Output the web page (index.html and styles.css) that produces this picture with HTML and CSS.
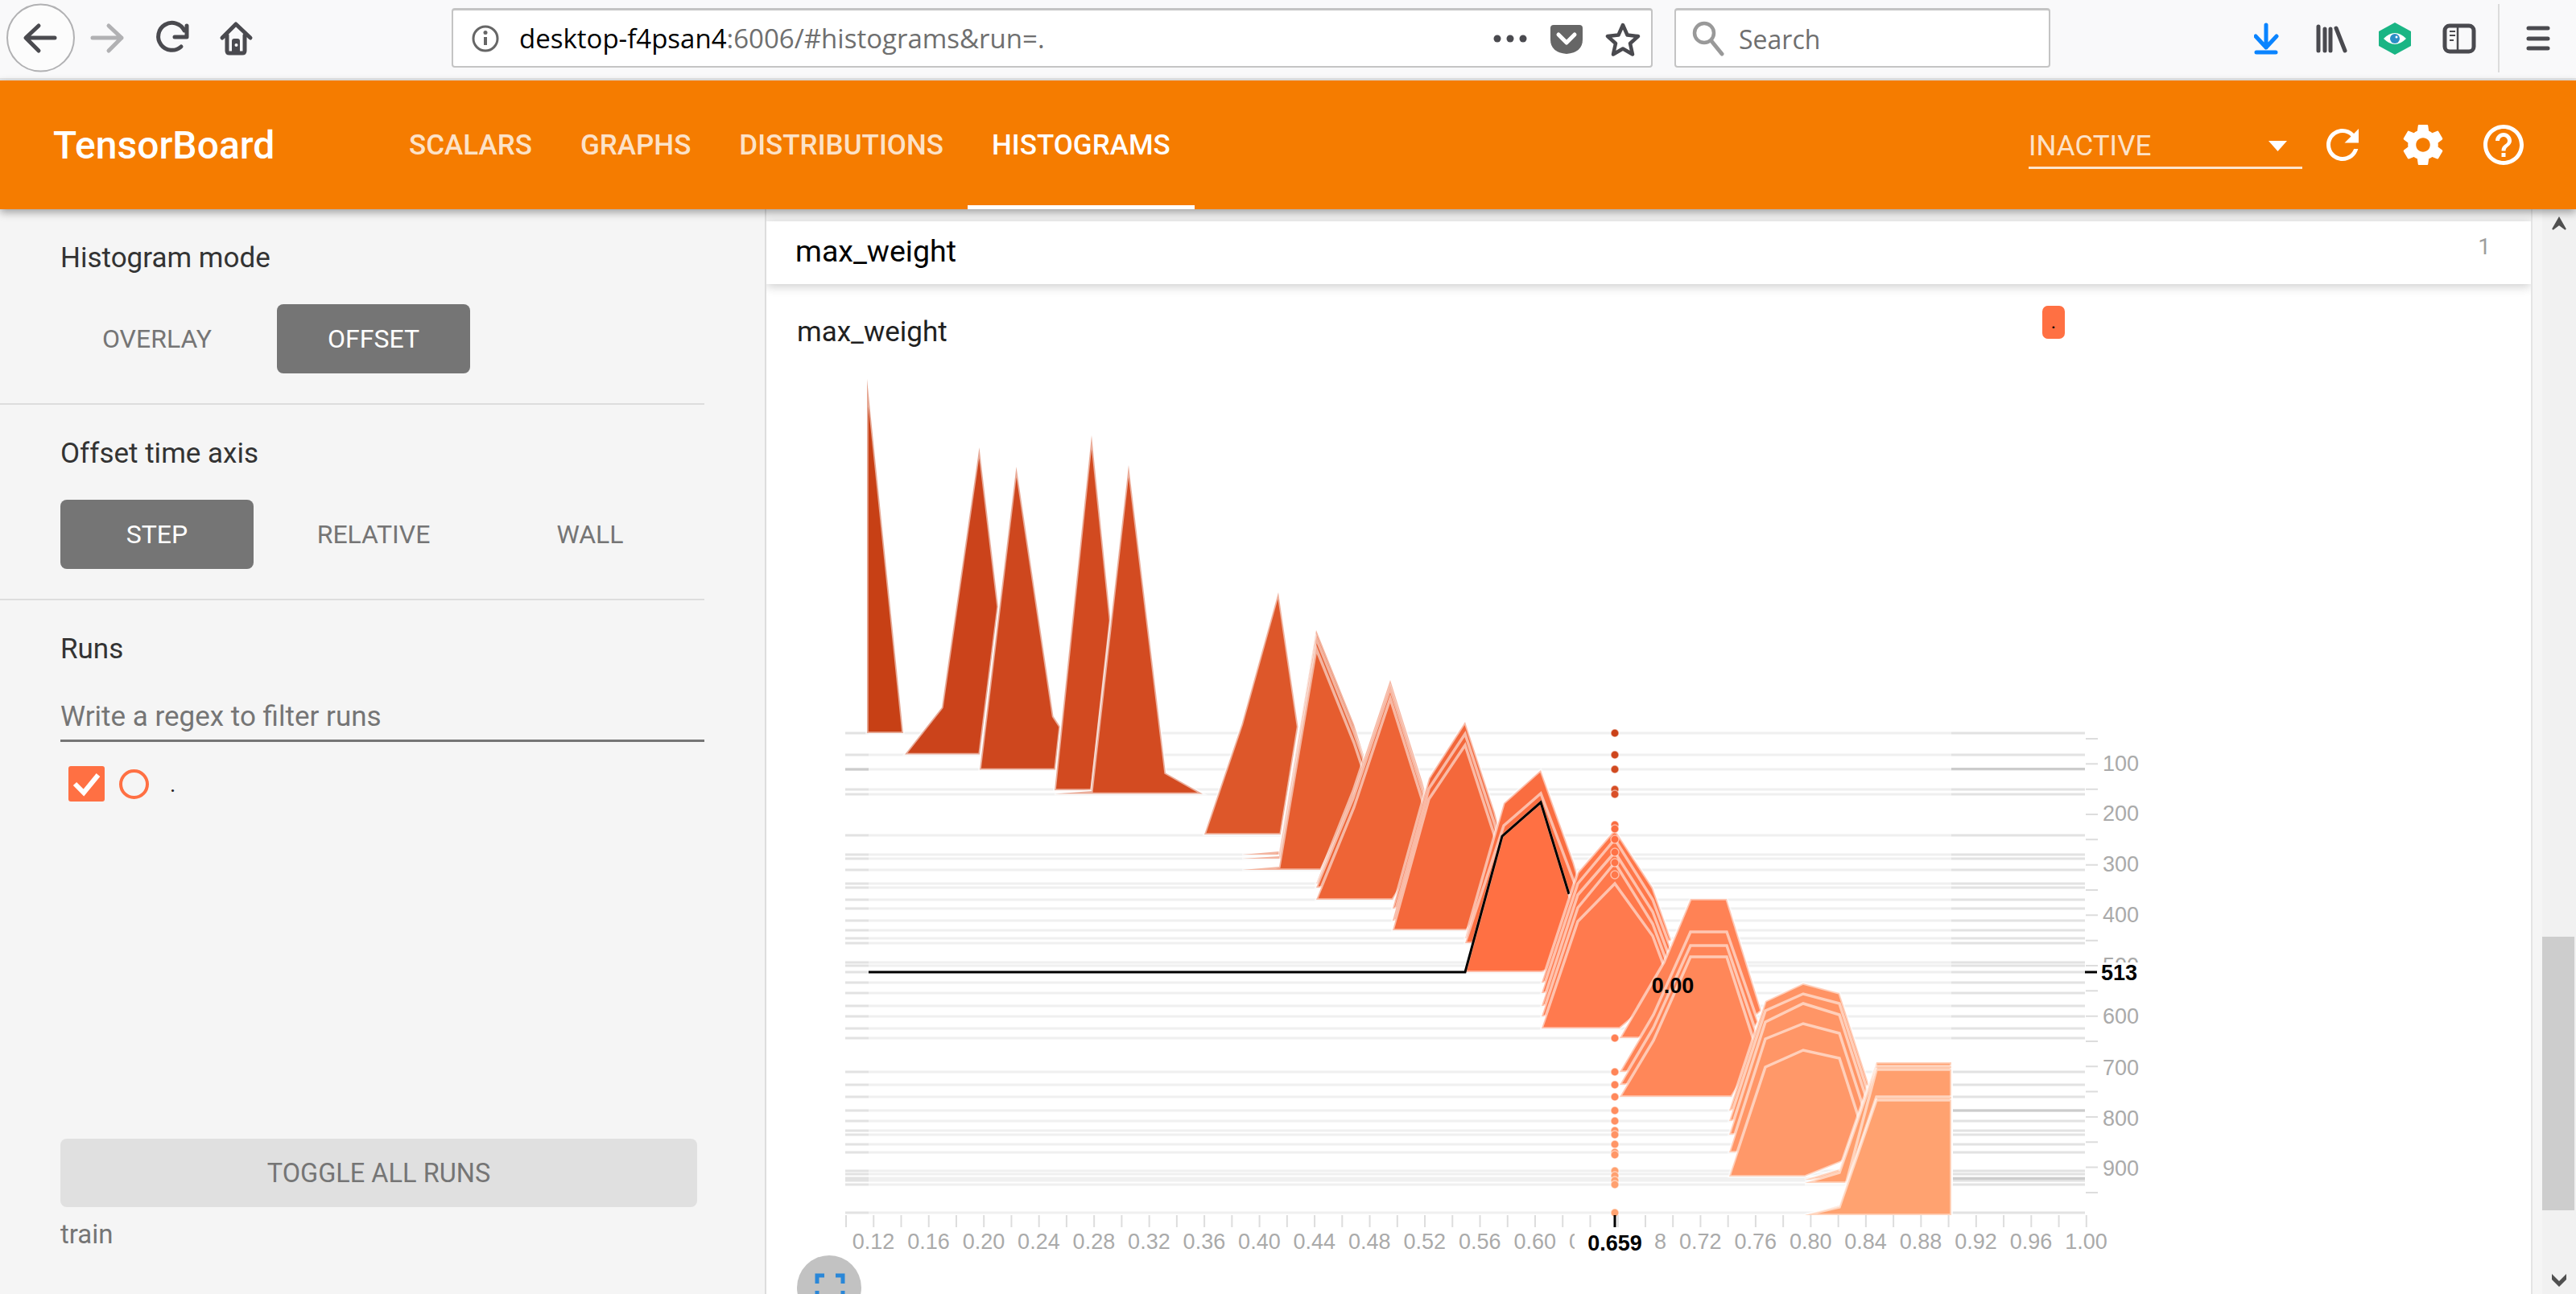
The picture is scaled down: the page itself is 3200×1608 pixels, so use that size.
FILE: index.html
```html
<!DOCTYPE html>
<html lang="en">
<head>
  <meta charset="UTF-8" />
  <title>TensorBoard</title>
  <link rel="stylesheet" href="styles.css">
</head>
<body>
  <div class="browser">
    <svg class="browser-nav" width="340" height="97" viewBox="0 0 340 97">
      <circle cx="50.5" cy="47" r="41.5" fill="#fcfcfc" stroke="#b1b1b3" stroke-width="2"/>
      <path class="ico" d="M68 47H33M48 32L32 47l16 16"/>
      <path class="ico ico-off" d="M115 47h36M135 32l16 15-16 16"/>
      <path class="ico" d="M225 58a17 17 0 1 1 4-20M232 32v14h-15"/>
      <path class="ico" d="M276 47l17-17 18 17M282 44v19q0 3 3 3h16q3 0 3-3V44"/>
      <path d="M288 66V51q0-3 3-3h4q3 0 3 3v15z" fill="#4a4a4f"/>
      <circle cx="293.500" cy="56" r="2" fill="#f9f9fa"/>
    </svg>
    <div class="urlbar">
      <svg width="36" height="36" viewBox="0 0 36 36"><circle cx="18" cy="18" r="15" fill="none" stroke="#666" stroke-width="3"/><path d="M18 16v10" stroke="#666" stroke-width="4"/><circle cx="18" cy="10.500" r="2.500" fill="#666"/></svg>
      <span class="url"><b>desktop-f4psan4</b>:6006/#histograms&amp;run=.</span>
      <svg class="url-actions" width="184" height="44" viewBox="0 0 184 44">
        <circle cx="5" cy="22" r="4.500" fill="#4a4a4f"/><circle cx="21" cy="22" r="4.500" fill="#4a4a4f"/><circle cx="37" cy="22" r="4.500" fill="#4a4a4f"/>
        <path d="M71 9q0-4 4-4h32q4 0 4 4v14q0 16-20 18-20-2-20-18z" fill="#666"/>
        <path d="M81 17l10 10 10-10" fill="none" stroke="#fff" stroke-width="5" stroke-linecap="round" stroke-linejoin="round"/>
        <path d="M161 5l5.500 12.500 13.500 1.500-10 9 3 13.500-12-7-12 7 3-13.500-10-9 13.500-1.500z" fill="none" stroke="#4a4a4f" stroke-width="4.500" stroke-linejoin="round"/>
      </svg>
    </div>
    <div class="searchbar">
      <svg width="44" height="44" viewBox="0 0 44 44"><circle cx="17" cy="15" r="12" fill="none" stroke="#999" stroke-width="4.500"/><path d="M26 25l13 16" stroke="#999" stroke-width="5" stroke-linecap="round"/></svg>
      <span>Search</span>
    </div>
    <svg class="browser-tools" width="400" height="97" viewBox="2800 0 400 97">
      <path d="M2815 31v28M2802 45l13 14 13-14M2803 65h24" fill="none" stroke="#0a84ff" stroke-width="5" stroke-linecap="round" stroke-linejoin="round"/>
      <path class="ico" d="M2880 33v30M2888 36v27M2895 36v27M2902 35l11 28"/>
      <path d="M2975 28l20 11v18l-20 11-20-11V39z" fill="#1ab584"/>
      <path d="M2961 48q14-14 28 0-14 14-28 0z" fill="#fff"/>
      <circle cx="2975" cy="48" r="6" fill="#2a8fc5"/>
      <circle cx="2977" cy="46" r="1.500" fill="#fff"/>
      <rect x="3037" y="32" width="36" height="32" rx="6" fill="none" stroke="#4a4a4f" stroke-width="5"/>
      <path d="M3053 32v32" stroke="#4a4a4f" stroke-width="2.500"/>
      <path d="M3043 39h7M3043 44h7M3043 50h5" stroke="#4a4a4f" stroke-width="2"/>
      <rect x="3103" y="5" width="2" height="85" fill="#dcdcdc"/>
      <path class="ico" d="M3141 35h24M3141 48h24M3141 60h24"/>
    </svg>
  </div>

  <header class="topbar">
    <div class="brand">TensorBoard</div>
    <nav class="tabs">
      <a class="tab">Scalars</a>
      <a class="tab">Graphs</a>
      <a class="tab">Distributions</a>
      <a class="tab active">Histograms</a>
    </nav>
    <div class="topbar-right">
      <div class="dropdown">
        <span>Inactive</span>
        <svg width="24" height="14" viewBox="0 0 24 14"><path d="M0 0h23L11.500 13z" fill="#fff"/></svg>
      </div>
      <svg class="top-ico" viewBox="0 0 24 24"><path d="M17.650 6.350C16.200 4.900 14.210 4 12 4c-4.420 0-7.990 3.580-7.990 8s3.570 8 7.990 8c3.730 0 6.840-2.550 7.730-6h-2.080c-.82 2.330-3.040 4-5.650 4-3.310 0-6-2.690-6-6s2.690-6 6-6c1.660 0 3.140.69 4.220 1.780L13 11h7V4l-2.350 2.350z"/></svg>
      <svg class="top-ico" viewBox="0 0 24 24"><path d="M19.430 12.980c.04-.32.07-.64.07-.98s-.03-.66-.07-.98l2.110-1.650c.19-.15.24-.42.12-.64l-2-3.460c-.12-.22-.39-.3-.61-.22l-2.490 1c-.52-.4-1.080-.73-1.690-.98l-.38-2.650C14.460 2.180 14.250 2 14 2h-4c-.25 0-.46.18-.49.42l-.38 2.650c-.61.25-1.170.59-1.690.98l-2.490-1c-.23-.09-.49 0-.61.22l-2 3.460c-.13.22-.07.49.12.64l2.110 1.650c-.04.32-.07.65-.07.98s.03.66.07.98l-2.110 1.650c-.19.15-.24.42-.12.64l2 3.460c.12.22.39.3.61.22l2.490-1c.52.4 1.080.73 1.690.98l.38 2.650c.03.24.24.42.49.42h4c.25 0 .46-.18.49-.42l.38-2.650c.61-.25 1.170-.59 1.690-.98l2.490 1c.23.09.49 0 .61-.22l2-3.460c.12-.22.07-.49-.12-.64l-2.110-1.650zM12 15.500c-1.930 0-3.500-1.570-3.500-3.500s1.570-3.500 3.500-3.500 3.500 1.570 3.500 3.500-1.570 3.500-3.500 3.500z"/></svg>
      <svg class="top-ico" viewBox="0 0 24 24"><path d="M11 18h2v-2h-2v2zm1-16C6.480 2 2 6.480 2 12s4.480 10 10 10 10-4.480 10-10S17.520 2 12 2zm0 18c-4.410 0-8-3.590-8-8s3.590-8 8-8 8 3.590 8 8-3.590 8-8 8zm0-14c-2.210 0-4 1.790-4 4h2c0-1.100.9-2 2-2s2 .9 2 2c0 2-3 1.750-3 5h2c0-2.250 3-2.500 3-5 0-2.210-1.790-4-4-4z"/></svg>
    </div>
  </header>

  <div class="content">
    <aside class="sidebar">
      <section class="side-section">
        <div class="side-label">Histogram mode</div>
        <div class="btn-row">
          <div class="mode-btn">Overlay</div>
          <div class="mode-btn on">Offset</div>
        </div>
      </section>
      <section class="side-section">
        <div class="side-label">Offset time axis</div>
        <div class="btn-row">
          <div class="mode-btn on">Step</div>
          <div class="mode-btn">Relative</div>
          <div class="mode-btn">Wall</div>
        </div>
      </section>
      <section class="side-section runs">
        <div class="side-label">Runs</div>
        <div class="filter">Write a regex to filter runs</div>
        <div class="run-row">
          <svg class="run-check" width="45" height="44" viewBox="0 0 45 44"><rect width="45" height="44" rx="3" fill="#ff7043"/><path d="M8 22l11 11 18-22" fill="none" stroke="#fff" stroke-width="6"/></svg>
          <span class="run-radio"></span>
          <span class="run-name">.</span>
        </div>
      </section>
      <div class="side-footer">
        <div class="toggle">Toggle all runs</div>
        <div class="train">train</div>
      </div>
    </aside>

    <main class="main">
      <div class="card-head">
        <span class="card-title">max_weight</span>
        <span class="card-count">1</span>
      </div>
      <div class="chart-head">
        <span class="chart-title">max_weight</span>
        <span class="chart-tag">.</span>
      </div>
      <svg class="chart" width="2192" height="1148" viewBox="952 460 2192 1148">
        <!-- baselines, one per step -->
        <path class="base" d="M1079 911H2424M1079 938H2424M1079 956H2424M1079 981H2424M1079 987H2424M1079 1038H2424M1079 1062H2424M1079 1067H2424M1079 1081H2424M1079 1098H2424M1079 1103H2424M1079 1118H2424M1079 1129H2424M1079 1144H2424M1079 1156H2424M1079 1166H2424M1079 1172H2424M1079 1196H2424M1079 1200H2424M1079 1208H2424M1079 1221H2424M1079 1234H2424M1079 1250H2424M1079 1263H2424M1079 1278H2424M1079 1290H2424M1079 1332H2424M1079 1348H2424M1079 1363H2424M1079 1380H2424M1079 1393H2424M1079 1405H2424M1079 1410H2424M1079 1422H2424M1079 1432H2424M1079 1455H2424M1079 1459H2424M1079 1464H2424M1079 1467H2424M1079 1472H2424M1079 1507H2424"/>
        <path class="base-end" d="M1050 911H1079M2424 911H2590M1050 938H1079M2424 938H2590M1050 956H1079M2424 956H2590M1050 981H1079M2424 981H2590M1050 987H1079M2424 987H2590M1050 1038H1079M2424 1038H2590M1050 1062H1079M2424 1062H2590M1050 1067H1079M2424 1067H2590M1050 1081H1079M2424 1081H2590M1050 1098H1079M2424 1098H2590M1050 1103H1079M2424 1103H2590M1050 1118H1079M2424 1118H2590M1050 1129H1079M2424 1129H2590M1050 1144H1079M2424 1144H2590M1050 1156H1079M2424 1156H2590M1050 1166H1079M2424 1166H2590M1050 1172H1079M2424 1172H2590M1050 1196H1079M2424 1196H2590M1050 1200H1079M2424 1200H2590M1050 1208H1079M2424 1208H2590M1050 1221H1079M2424 1221H2590M1050 1234H1079M2424 1234H2590M1050 1250H1079M2424 1250H2590M1050 1263H1079M2424 1263H2590M1050 1278H1079M2424 1278H2590M1050 1290H1079M2424 1290H2590M1050 1332H1079M2424 1332H2590M1050 1348H1079M2424 1348H2590M1050 1363H1079M2424 1363H2590M1050 1380H1079M2424 1380H2590M1050 1393H1079M2424 1393H2590M1050 1405H1079M2424 1405H2590M1050 1410H1079M2424 1410H2590M1050 1422H1079M2424 1422H2590M1050 1432H1079M2424 1432H2590M1050 1455H1079M2424 1455H2590M1050 1459H1079M2424 1459H2590M1050 1464H1079M2424 1464H2590M1050 1467H1079M2424 1467H2590M1050 1472H1079M2424 1472H2590M1050 1507H1079M2424 1507H2590"/>
        <path class="base-dark" d="M2424 955.500H2590M2424 1464.500H2590M2424 1380H2590M1050 956H1079"/>

        <!-- histograms, back to front -->
        <g class="hist">
          <polygon fill="#c74015" points="1077,471 1122,911 1077,911"/>
          <polygon fill="#cb431b" points="1124,937.500 1170,879 1216.500,556 1240,754 1217,937.500"/>
          <polygon fill="#ce471e" points="1217,956.500 1262.500,580 1308.500,890 1317,903 1311,956.500"/>
          <polygon fill="#d24a20" points="1310,982 1356,541 1379.500,771 1356,982"/>
          <polygon fill="#d34b21" points="1310,986.500 1356,983 1402,578 1448,960.500 1494,986.500"/>
          <polygon fill="#dd572a" points="1496,1037 1542.500,900 1588,736 1612.500,903 1591,1037"/>

          <polygon fill="#e45b2e" points="1543,1062 1589,1058 1635,783 1682,900 1696,945 1641,1062"/>
          <polygon fill="#e55c2f" points="1543,1067 1589,1064 1635,793 1682,910 1696,950 1641,1067"/>
          <polygon fill="#e65d2f" points="1543,1081 1589,1077 1635,806 1682,923 1696,965 1641,1081"/>

          <polygon fill="#ec6235" points="1635,1098 1681,983 1727,845 1767,972 1780,1020 1730,1098"/>
          <polygon fill="#ed6335" points="1635,1103 1681,992 1727,855 1767,982 1780,1025 1730,1103"/>
          <polygon fill="#ee6436" points="1635,1118 1682,1003 1727,868 1767,995 1780,1040 1730,1118"/>

          <polygon fill="#f2663a" points="1730,1129 1775,967 1820,897 1857,1010 1870,1060 1822,1129"/>
          <polygon fill="#f3673a" points="1730,1144 1775,980 1820,912 1857,1025 1870,1075 1822,1144"/>
          <polygon fill="#f4683b" points="1730,1156 1775,993 1820,926 1857,1040 1870,1090 1822,1156"/>

          <polygon fill="#fa6d40" points="1820,1166 1868,998 1914,957 1955,1072 1975,1140 1915,1166"/>
          <polygon fill="#fb6e41" points="1820,1172 1868,1026 1914,986 1955,1095 1975,1150 1915,1172"/>
          <polygon fill="#ff7043" points="1820,1208 1866,1039 1914,997 1949,1111 1975,1190 1915,1208"/>
        </g>
        <path class="focus-line" d="M1079 1208H1820L1866 1039 1914 997 1949 1111"/>
        <g class="hist">
          <polygon fill="#ff7648" points="1915,1221 1960,1084 2006,1031 2053,1103 2076,1168 2012,1221"/>
          <polygon fill="#ff7749" points="1915,1234 1960,1098 2006,1043 2053,1118 2076,1180 2012,1234"/>
          <polygon fill="#ff784a" points="1915,1250 1960,1112 2006,1059 2053,1133 2076,1195 2012,1250"/>
          <polygon fill="#ff794c" points="1915,1263 1960,1128 2006,1072 2053,1148 2076,1210 2012,1263"/>
          <polygon fill="#ff7a4e" points="1915,1278 1960,1145 2006,1098 2053,1163 2076,1225 2012,1278"/>

          <polygon fill="#ff8255" points="2012,1290 2067,1196 2100,1117 2145,1117 2188,1256 2151,1290"/>
          <polygon fill="#ff8356" points="2012,1332 2054,1261 2100,1158 2145,1158 2184,1270 2151,1332"/>
          <polygon fill="#ff8558" points="2012,1348 2054,1277 2100,1175 2145,1175 2184,1290 2151,1348"/>
          <polygon fill="#ff8759" points="2012,1363 2054,1293 2100,1189 2145,1189 2184,1310 2151,1363"/>

          <polygon fill="#ff9364" points="2148,1380 2193,1244 2240,1222 2285,1234 2322,1349 2242,1380"/>
          <polygon fill="#ff9465" points="2148,1393 2193,1256 2240,1235 2285,1247 2322,1362 2242,1393"/>
          <polygon fill="#ff9566" points="2148,1410 2193,1270 2240,1247 2285,1261 2322,1376 2242,1410"/>
          <polygon fill="#ff9667" points="2148,1432 2193,1291 2240,1272 2285,1284 2322,1399 2242,1432"/>
          <polygon fill="#ff9869" points="2148,1462 2193,1326 2240,1305 2285,1315 2322,1430 2242,1462"/>

          <polygon fill="#ff9d6c" points="2242,1466 2285,1453 2331,1320 2424,1320 2424,1466"/>
          <polygon fill="#ff9e6d" points="2242,1470 2285,1457 2331,1325 2424,1325 2424,1470"/>
          <polygon fill="#ff9f6e" points="2242,1472 2293,1472 2331,1329 2424,1329 2424,1472"/>
          <polygon fill="#ffa06f" points="2242,1510 2285,1498 2331,1363 2424,1363 2424,1510"/>
          <polygon fill="#ffa270" points="2242,1510 2285,1500 2331,1367 2424,1367 2424,1510"/>
        </g>

        <!-- values under the cursor -->
        <g class="dots">
          <circle cx="2006" cy="911" r="5" fill="#ca4219"/>
          <circle cx="2006" cy="938" r="5" fill="#ce461d"/>
          <circle cx="2006" cy="956" r="5" fill="#d14a20"/>
          <circle cx="2006" cy="981" r="5" fill="#d64e25"/>
          <circle cx="2006" cy="987" r="5" fill="#d95029"/>
          <circle cx="2006" cy="1025" r="5" fill="#f96c40"/>
          <circle cx="2006" cy="1030" r="5" fill="#fb6e42"/>
          <circle cx="2006" cy="1043" r="5" fill="#ff7043"/>
          <circle cx="2006" cy="1059" r="5" fill="#ff7246"/>
          <circle cx="2006" cy="1072" r="5" fill="#ff7548"/>
          <circle cx="2006" cy="1087" r="5" fill="#ff784b"/>
          <circle cx="2006" cy="1290" r="5" fill="#ff8054"/>
          <circle cx="2006" cy="1332" r="5" fill="#ff8558"/>
          <circle cx="2006" cy="1348" r="5" fill="#ff8659"/>
          <circle cx="2006" cy="1363" r="5" fill="#ff885b"/>
          <circle cx="2006" cy="1380" r="5" fill="#ff8d5f"/>
          <circle cx="2006" cy="1393" r="5" fill="#ff9062"/>
          <circle cx="2006" cy="1405" r="5" fill="#ff9263"/>
          <circle cx="2006" cy="1410" r="5" fill="#ff9364"/>
          <circle cx="2006" cy="1422" r="5" fill="#ff9566"/>
          <circle cx="2006" cy="1432" r="5" fill="#ff9667"/>
          <circle cx="2006" cy="1435" r="5" fill="#ff9768"/>
          <circle cx="2006" cy="1455" r="5" fill="#ffa06f"/>
          <circle cx="2006" cy="1461" r="5" fill="#ffa06f"/>
          <circle cx="2006" cy="1467" r="5" fill="#ffa06f"/>
          <circle cx="2006" cy="1472" r="5" fill="#ffa06f"/>
          <circle cx="2006" cy="1507" r="5" fill="#ffa270"/>
        </g>

        <!-- axes -->
        <line class="tick" x1="1050" y1="1517.500" x2="2593" y2="1517.500" stroke-dasharray="2 32.240"/>
        <line class="tick" x1="2598.500" y1="917" x2="2598.500" y2="1486" stroke-dasharray="2 29.330"/>
        <g class="axis-x">
          <text x="1085" y="1552">0.12</text><text x="1153.500" y="1552">0.16</text><text x="1222" y="1552">0.20</text><text x="1290.400" y="1552">0.24</text>
          <text x="1358.900" y="1552">0.28</text><text x="1427.400" y="1552">0.32</text><text x="1495.900" y="1552">0.36</text><text x="1564.400" y="1552">0.40</text>
          <text x="1632.800" y="1552">0.44</text><text x="1701.300" y="1552">0.48</text><text x="1769.800" y="1552">0.52</text><text x="1838.300" y="1552">0.56</text>
          <text x="1906.800" y="1552">0.60</text><text x="1975.200" y="1552">0.64</text><text x="2043.700" y="1552">0.68</text><text x="2112.200" y="1552">0.72</text>
          <text x="2180.700" y="1552">0.76</text><text x="2249.200" y="1552">0.80</text><text x="2317.600" y="1552">0.84</text><text x="2386.100" y="1552">0.88</text>
          <text x="2454.600" y="1552">0.92</text><text x="2523.100" y="1552">0.96</text><text x="2591.600" y="1552">1.00</text>
        </g>
        <g class="axis-y">
          <text x="2612" y="958">100</text><text x="2612" y="1020">200</text><text x="2612" y="1083">300</text><text x="2612" y="1146">400</text>
          <text x="2612" y="1209">500</text><text x="2612" y="1272">600</text><text x="2612" y="1336">700</text><text x="2612" y="1399">800</text><text x="2612" y="1461">900</text>
        </g>

        <!-- cursor labels -->
        <rect x="1956" y="1527" width="99" height="32" fill="#fff"/>
        <path class="cursor-tick" d="M2006 1510v15"/>
        <text class="cursor-label" x="2006" y="1554" text-anchor="middle">0.659</text>
        <rect x="2608" y="1196" width="54" height="28" fill="#fff"/>
        <path class="cursor-tick" d="M2590 1208h15"/>
        <text class="cursor-label" x="2610" y="1218">513</text>
        <text class="cursor-label" x="2078" y="1234" text-anchor="middle">0.00</text>

        <!-- fit to domain button, cut off by the window -->
        <circle cx="1030" cy="1600" r="40" fill="#c2c2c2"/>
        <path d="M1015 1595v-10h9M1047 1595v-10h-9M1015 1604v6M1047 1604v6" fill="none" stroke="#2a87d8" stroke-width="5"/>
      </svg>
    </main>
    <div class="gutter"></div>
    <div class="scrollbar">
      <svg class="scroll-up" width="42" height="36" viewBox="0 0 42 36"><path d="M21 11l-8 14 8-6 8 6z" fill="#505050" stroke="#505050" stroke-width="2"/></svg>
      <div class="scroll-thumb"></div>
      <svg class="scroll-down" width="42" height="36" viewBox="0 0 42 36"><path d="M12 11l9 9 9-9v7l-9 9-9-9z" fill="#505050"/></svg>
    </div>
  </div>
</body>
</html>
```

FILE: styles.css
```css
* {
  box-sizing: border-box;
}

html, body {
  margin: 0;
  height: 100%;
  overflow: hidden;
}

body {
  display: flex;
  flex-direction: column;
  font-family: Roboto, sans-serif;
  background-color: #fff;
  color: #333;
}

/* firefox chrome */
.browser {
  flex: none;
  height: 100px;
  display: flex;
  align-items: flex-start;
  background-color: #f9f9fa;
  border-bottom: 3px solid #e6e6e6;
}

.browser-nav {
  flex: none;
  margin-right: 221px;
}

.ico {
  fill: none;
  stroke: #4a4a4f;
  stroke-width: 5;
  stroke-linecap: round;
  stroke-linejoin: round;
}

.ico-off {
  stroke: #b1b1b3;
}

.urlbar, .searchbar {
  height: 74px;
  margin-top: 10px;
  display: flex;
  align-items: center;
  background-color: #fff;
  border: 2px solid #c4c4c4;
  border-top-width: 3px;
  border-radius: 4px;
  font-family: "Open Sans", sans-serif;
}

.urlbar {
  flex: none;
  width: 1492px;
  padding-left: 22px;
  margin-right: 27px;
  font-size: 33px;
}

.url {
  margin-left: 24px;
  color: #6f6f6f;
  white-space: nowrap;
}

.url b {
  font-weight: 400;
  color: #000;
}

.url-actions {
  margin-left: auto;
  margin-right: 12px;
}

.searchbar {
  flex: none;
  width: 467px;
  padding-left: 18px;
  font-size: 32px;
  color: #6f6f6f;
}

.searchbar span {
  margin-left: 16px;
  padding-top: 2px;
}

.browser-tools {
  flex: none;
  margin-left: auto;
}

/* tensorboard header */
.topbar {
  flex: none;
  position: relative;
  z-index: 2;
  height: 160px;
  display: flex;
  align-items: center;
  padding-left: 66px;
  background-color: #f57c00;
  color: #fff;
  box-shadow: 0 4px 10px rgba(0,0,0,0.35);
}

.brand {
  width: 412px;
  font-size: 48px;
  font-weight: 500;
}

.tabs {
  display: flex;
  align-self: stretch;
}

.tab {
  display: flex;
  align-items: center;
  padding: 0 30px;
  font-size: 35px;
  font-weight: 500;
  text-transform: uppercase;
  color: rgba(255,255,255,0.8);
}

.tab.active {
  color: #fff;
  border-bottom: 5px solid #fff;
  padding-top: 5px;
}

.topbar-right {
  margin-left: auto;
  margin-right: 60px;
  display: flex;
  align-items: center;
  gap: 40px;
}

.dropdown {
  width: 340px;
  height: 54px;
  margin-right: -20px;
  display: flex;
  align-items: center;
  justify-content: space-between;
  padding-right: 18px;
  font-size: 35px;
  text-transform: uppercase;
  color: rgba(255,255,255,0.8);
  border-bottom: 3px solid rgba(255,255,255,0.8);
  margin-top: 6px;
}

.top-ico {
  width: 60px;
  height: 60px;
  fill: #fff;
}

/* page */
.content {
  flex: 1;
  min-height: 0;
  display: flex;
}

.sidebar {
  flex: none;
  width: 952px;
  display: flex;
  flex-direction: column;
  background-color: #f5f5f5;
  border-right: 2px solid #ddd;
}

.side-section {
  width: 875px;
  padding: 40px 0 37px 75px;
  border-bottom: 2px solid #ddd;
}

.side-section.runs {
  border-bottom: none;
  padding-bottom: 0;
}

.side-label {
  height: 40px;
  font-size: 35px;
  line-height: 42px;
  color: #333;
}

.btn-row {
  display: flex;
  gap: 29px;
  margin-top: 38px;
}

.mode-btn {
  width: 240px;
  height: 86px;
  display: flex;
  align-items: center;
  justify-content: center;
  border-radius: 8px;
  font-size: 32px;
  text-transform: uppercase;
  color: #757575;
}

.mode-btn.on {
  background-color: #757575;
  color: #fff;
}

.filter {
  height: 56px;
  margin-top: 40px;
  font-size: 35px;
  line-height: 49px;
  color: #757575;
  border-bottom: 3px solid #757575;
}

.run-row {
  display: flex;
  align-items: center;
  margin: 30px 0 0 10px;
}

.run-radio {
  width: 37px;
  height: 37px;
  margin-left: 18px;
  border-radius: 50%;
  border: 4px solid #ff7043;
}

.run-name {
  margin-left: 26px;
  font-size: 28px;
  color: #212121;
}

.side-footer {
  margin-top: auto;
  padding: 0 0 54px 75px;
}

.toggle {
  width: 791px;
  height: 85px;
  display: flex;
  align-items: center;
  justify-content: center;
  border-radius: 8px;
  background-color: #e0e0e0;
  font-size: 32.5px;
  text-transform: uppercase;
  color: #757575;
}

.train {
  margin-top: 14px;
  font-size: 33px;
  line-height: 40px;
  color: #757575;
}

.main {
  flex: 1;
  min-width: 0;
  padding-top: 15px;
  background: linear-gradient(#f5f5f5 15px, #fff 15px);
  overflow: hidden;
}

.card-head {
  height: 78px;
  display: flex;
  align-items: center;
  justify-content: space-between;
  padding: 0 50px 0 36px;
  background-color: #fff;
  box-shadow: 0 3px 12px rgba(0,0,0,0.2);
}

.card-title {
  font-size: 37.5px;
  color: #000;
  margin-top: -5px;
}

.card-count {
  font-size: 28px;
  color: #9e9e9e;
  margin-top: -15px;
}

.chart-head {
  height: 107px;
  display: flex;
  align-items: flex-start;
  padding: 27px 579px 0 38px;
  justify-content: space-between;
}

.chart-title {
  font-size: 35px;
  line-height: 66px;
  color: #212121;
}

.chart-tag {
  width: 28px;
  height: 41px;
  border-radius: 7px;
  background-color: #ff7043;
  text-align: center;
  font-size: 24px;
  line-height: 40px;
  color: #000;
}

.chart {
  display: block;
}

.hist polygon {
  stroke: #fff;
  stroke-opacity: 0.55;
  stroke-width: 3.5;
}

.base {
  fill: none;
  stroke: #f0f0f0;
  stroke-width: 3;
}

.base-end {
  fill: none;
  stroke: #e2e2e2;
  stroke-width: 3;
}

.base-dark {
  fill: none;
  stroke: #ccc;
  stroke-width: 3;
}

.focus-line {
  fill: none;
  stroke: #000;
  stroke-width: 3;
}

.dots circle {
  stroke: #fff;
  stroke-opacity: 0.5;
  stroke-width: 1.500;
}

.tick {
  stroke: #ddd;
  stroke-width: 15;
}

.axis-x text, .axis-y text, .cursor-label {
  font-family: "Liberation Sans", sans-serif;
  font-size: 27px;
}

.axis-x text {
  fill: #aaa;
  text-anchor: middle;
}

.axis-y text {
  fill: #aaa;
}

.cursor-tick {
  stroke: #000;
  stroke-width: 3;
}

.cursor-label {
  font-weight: 700;
  fill: #000;
}

.gutter {
  flex: none;
  width: 14px;
  background-color: #f5f5f5;
  border-left: 2px solid #e4e4e4;
}

.scrollbar {
  flex: none;
  width: 42px;
  display: flex;
  flex-direction: column;
  background-color: #f1f1f1;
}

.scroll-thumb {
  width: 40px;
  height: 340px;
  margin-top: 868px;
  background-color: #cdcdcd;
}

.scroll-down {
  margin-top: auto;
}
```
